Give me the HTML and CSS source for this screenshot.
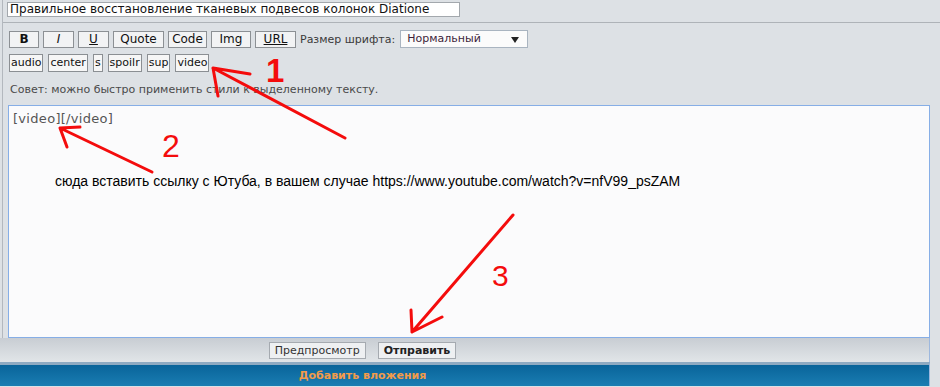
FILE: index.html
```html
<!DOCTYPE html>
<html lang="ru">
<head>
    <meta charset="UTF-8">
    <title>Ответить</title>
    <link rel="stylesheet" href="styles.css">
</head>
<body>
    <div class="editor">
        <div class="title-row">
            <div class="title-input">Правильное восстановление тканевых подвесов колонок Diatione</div>
        </div>

        <div class="toolbar">
            <span class="btn w30 bold">B</span>
            <span class="btn w31 italic">I</span>
            <span class="btn w31 under">U</span>
            <span class="btn w51">Quote</span>
            <span class="btn w39">Code</span>
            <span class="btn w40">Img</span>
            <span class="btn w41 under">URL</span>
            <span class="label">Размер шрифта:</span>
            <span class="select">Нормальный<i class="caret"></i></span>
        </div>

        <div class="toolbar tags">
            <span class="tag">audio</span>
            <span class="tag">center</span>
            <span class="tag">s</span>
            <span class="tag">spoilr</span>
            <span class="tag">sup</span>
            <span class="tag">video</span>
        </div>

        <p class="hint">Совет: можно быстро применить стили к выделенному тексту.</p>

        <div class="textarea">[video][/video]</div>
    </div>

    <div class="actions">
        <span class="action-btn">Предпросмотр</span>
        <span class="action-btn primary">Отправить</span>
    </div>

    <div class="attach">Добавить вложения</div>

    <!-- red notes drawn over the screenshot -->
    <svg class="notes" width="940" height="387" viewBox="0 0 940 387">
        <g class="arrow">
            <path d="M345 138 L213 68 M218 96 L213 68 L250 74"/>
            <path d="M152 172 L60 128 M67 147 L60 128 L80 127"/>
            <path d="M513 215 L412 332 M411 310 L412 332 L442 317"/>
        </g>
        <text class="num big" x="266" y="82">1</text>
        <text class="num" x="162" y="157">2</text>
        <text class="num small" x="492" y="286">3</text>
        <text class="note" x="55" y="186">сюда вставить ссылку с Ютуба, в вашем случае https://www.youtube.com/watch?v=nfV99_psZAM</text>
    </svg>
</body>
</html>
```

FILE: styles.css
```css
body {
    margin: 0;
    background-color: #dde1e5;
    font-family: "DejaVu Sans", Verdana, sans-serif;
    font-size: 11px;
    color: #222;
    width: 940px;
    height: 387px;
    overflow: hidden;
}

.editor {
    margin-left: 2px;
    border-left: 1px solid #b3b8be;
}

.title-row {
    height: 20px;
    padding: 2px 0 0 4px;
    border-bottom: 1px solid #aeb3b8;
}

.title-input {
    width: 453px;
    height: 15px;
    box-sizing: border-box;
    border: 1px solid #a3a8ad;
    background-color: #fff;
    padding: 0 2px;
    font-size: 12px;
    line-height: 13px;
    color: #111;
    white-space: nowrap;
}

.toolbar {
    display: flex;
    align-items: center;
    gap: 4px;
    margin-top: 7px;
    padding-left: 6px;
    height: 18px;
}

.btn {
    display: inline-block;
    height: 17px;
    box-sizing: border-box;
    border: 1px solid #8c9094;
    background-color: #f2f3f4;
    font-size: 12px;
    line-height: 15px;
    text-align: center;
    color: #111;
}

.w30 { width: 30px; }
.w31 { width: 31px; }
.w39 { width: 39px; }
.w40 { width: 40px; }
.w41 { width: 41px; }
.w51 { width: 51px; }

.bold { font-weight: bold; }
.italic { font-style: italic; }
.under { text-decoration: underline; }

.label {
    color: #3a3a3a;
}

.select {
    position: relative;
    width: 128px;
    height: 18px;
    box-sizing: border-box;
    margin-left: 1px;
    border: 1px solid #a9b4c0;
    background-color: #fbfbfb;
    padding-left: 6px;
    line-height: 16px;
    color: #3d1f3a;
}

.caret {
    position: absolute;
    right: 8px;
    top: 6px;
    border-left: 4px solid transparent;
    border-right: 4px solid transparent;
    border-top: 6px solid #222;
}

.tags {
    gap: 5px;
    margin-top: 6px;
}

.tag {
    height: 18px;
    box-sizing: border-box;
    border: 1px solid #8b8f93;
    background-color: #f6f6f6;
    padding: 0 1px;
    line-height: 16px;
    color: #111;
}

.hint {
    margin: 11px 0 0 7px;
    line-height: 13px;
    color: #4a4a4a;
}

.textarea {
    margin: 9px 0 0 5px;
    width: 922px;
    height: 233px;
    box-sizing: border-box;
    border: 1px solid #86aee6;
    background-color: #fbfbfc;
    padding: 5px 4px;
    font-size: 13px;
    letter-spacing: 0.3px;
    line-height: 15px;
    color: #555;
}

.actions {
    display: flex;
    justify-content: center;
    align-items: center;
    gap: 12px;
    width: 930px;
    height: 24px;
    padding-right: 204px;
    box-sizing: border-box;
    border-right: 1px solid #9db8de;
    background: linear-gradient(#c8cdd3, #e1e5e8);
}

.action-btn {
    height: 17px;
    box-sizing: border-box;
    border: 1px solid #a5aab0;
    background-color: #eef0f2;
    padding: 0 5px;
    line-height: 15px;
    color: #333;
}

.action-btn.primary {
    font-weight: bold;
    color: #222;
}

.attach {
    width: 930px;
    height: 24px;
    box-sizing: border-box;
    padding-right: 204px;
    border-top: 3px solid #8eaac2;
    border-right: 1px solid #9db8de;
    background: linear-gradient(#09649a, #1a7db2);
    text-align: center;
    font-weight: bold;
    line-height: 21px;
    color: #f29b4a;
}

.notes {
    position: absolute;
    top: 0;
    left: 0;
    pointer-events: none;
}

.arrow path {
    fill: none;
    stroke: #f40c0c;
    stroke-width: 3;
    stroke-linecap: round;
    stroke-linejoin: round;
}

.num {
    font-family: "Liberation Sans", Arial, sans-serif;
    font-size: 32px;
    fill: #f40c0c;
}

.num.big {
    font-size: 33px;
    font-weight: bold;
}

.num.small {
    font-size: 30px;
}

.note {
    font-family: "Liberation Sans", Arial, sans-serif;
    font-size: 14px;
    fill: #000;
}
```
